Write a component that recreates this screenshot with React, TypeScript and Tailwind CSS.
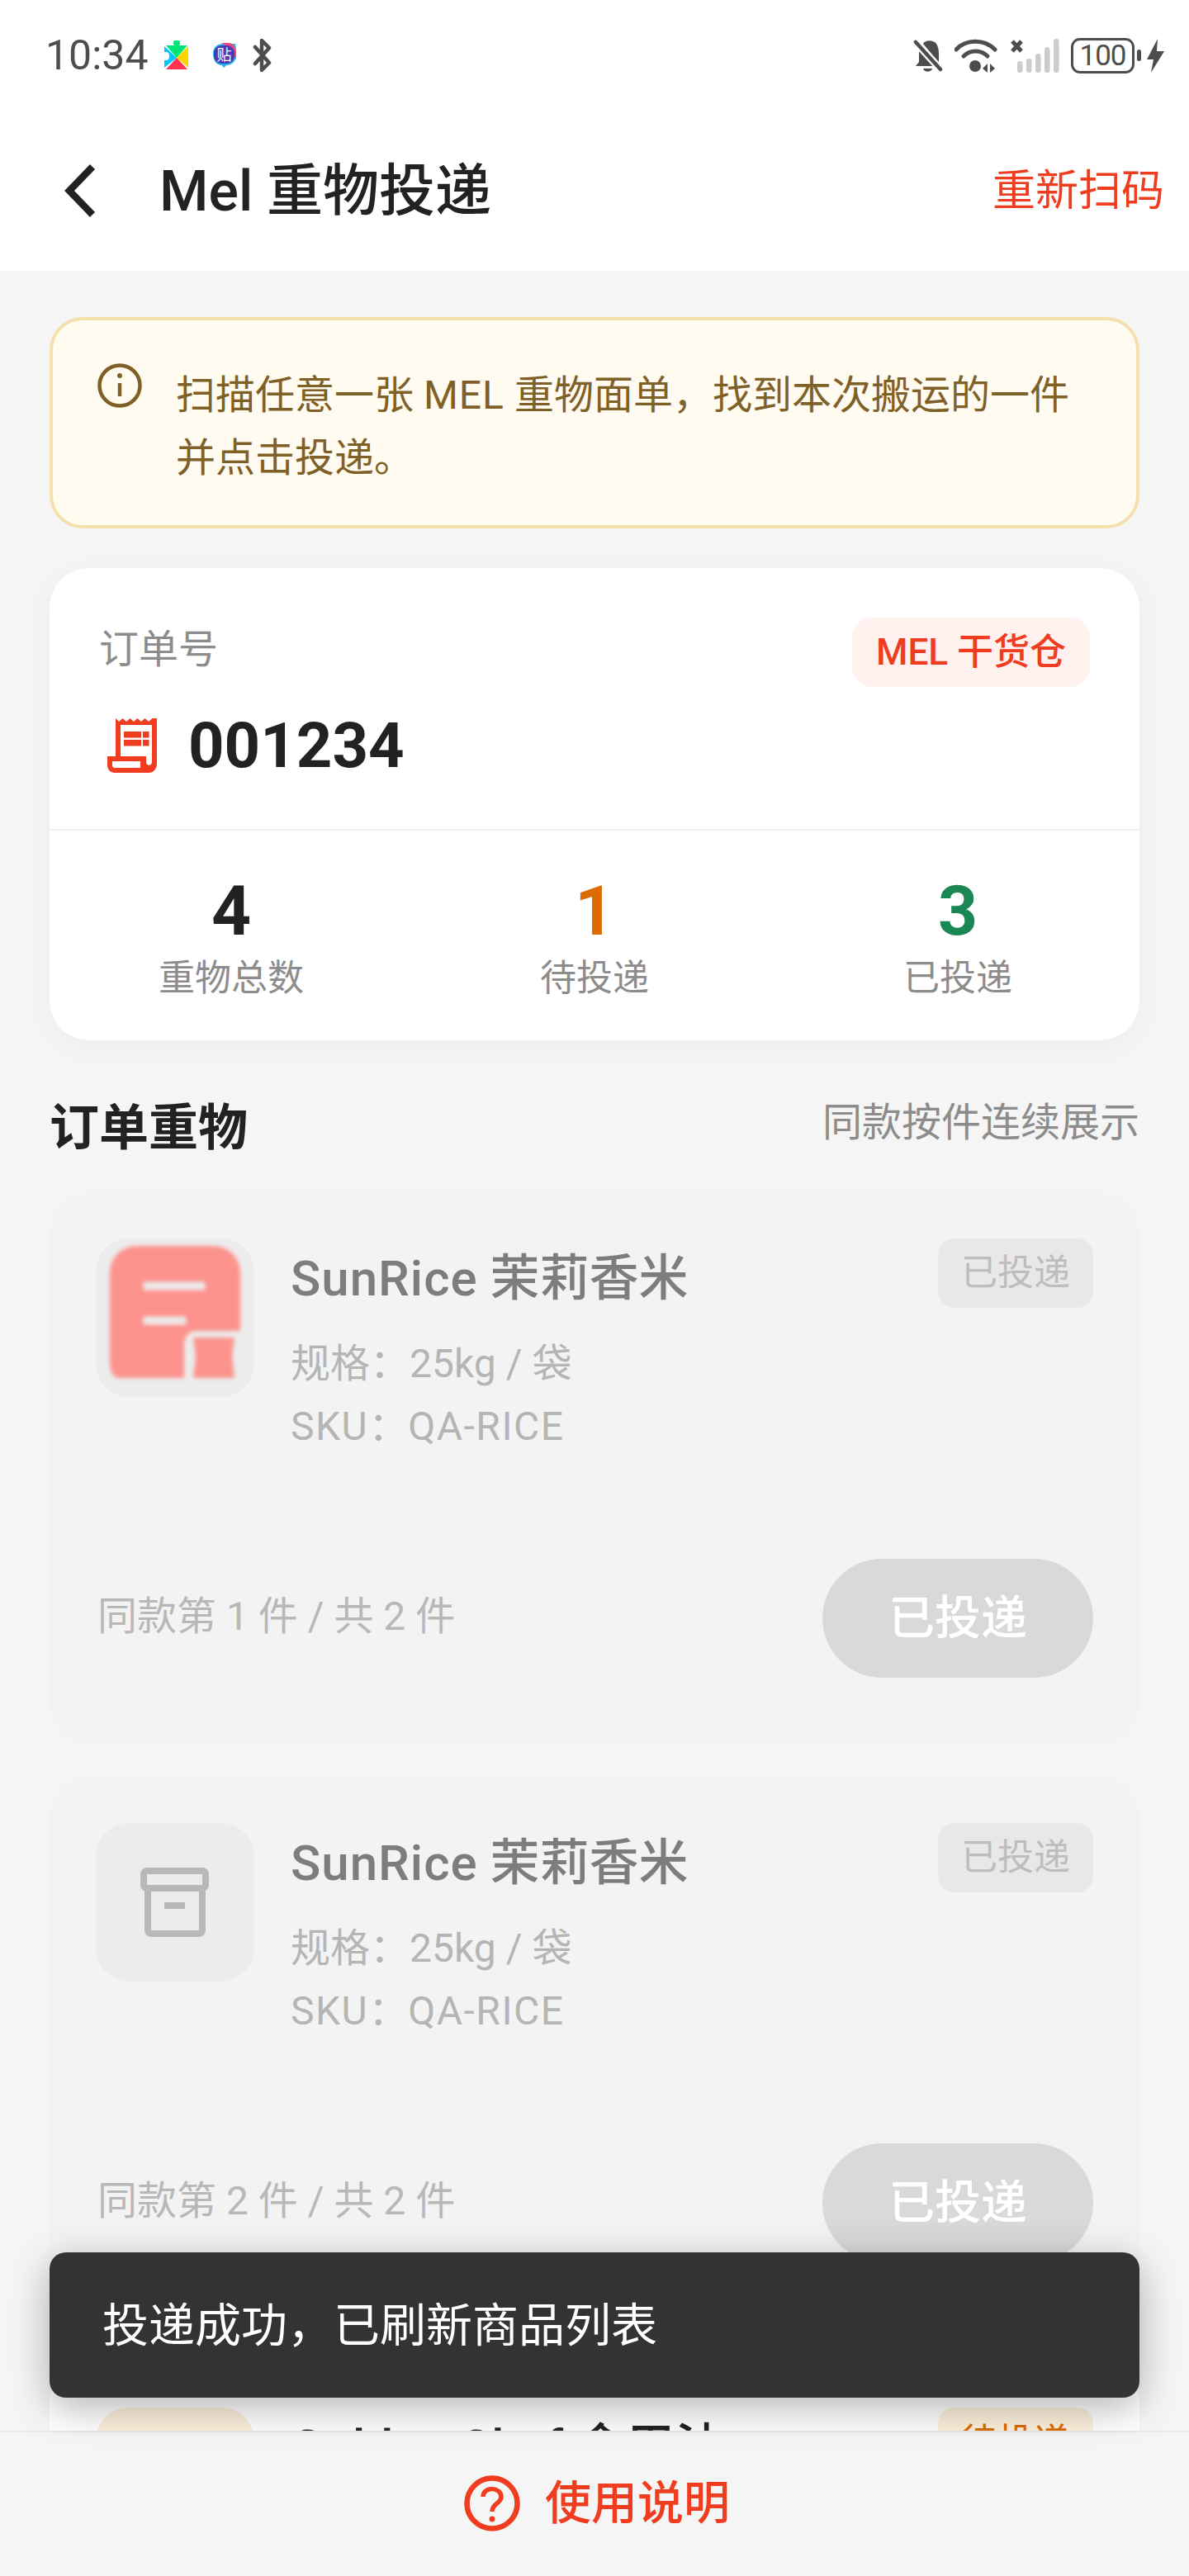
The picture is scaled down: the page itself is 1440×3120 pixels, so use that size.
import React from "react";

const RED = "#f03c1f";

function PlayIcon() {
  return (
    <svg width="30" height="36" viewBox="0 0 30 36" className="ml-[22px] shrink-0">
      <rect x="11" y="0" width="8" height="6" rx="2" fill="#00e676" />
      <path d="M2 6H28L15 21Z" fill="#00e676" />
      <path d="M0 7V14H3C7 14 7 24 3 24H0V33L15 21Z" fill="#00c8f8" />
      <path d="M29 7V33L15 21Z" fill="#ffd500" />
      <path d="M2 35H28L15 21Z" fill="#ff3350" />
    </svg>
  );
}

function TieIcon() {
  return (
    <svg width="28" height="31" viewBox="0 0 28 31" className="ml-[29px] shrink-0">
      <path d="M0 13C0 5 5 1 13 1H27C28 6 28 10 28 15C28 23 22 27 16 27L13 30L11 27C4 27 0 21 0 13Z" fill="#1fb1f0" />
      <path d="M10 0H20C25 1 28 6 28 13V20L20 6Z" fill="#f0487c" />
      <rect x="1" y="3" width="25" height="22" rx="9" fill="#4a3ab5" />
      <text x="13.5" y="21" fontSize="18" fill="#ffffff" textAnchor="middle" fontFamily="'Noto Sans CJK SC', sans-serif">贴</text>
    </svg>
  );
}

function BtIcon() {
  return (
    <svg width="24" height="42" viewBox="0 0 24 42" className="ml-[20px] shrink-0" fill="none" stroke="#4d4d4d" strokeWidth="4.5" strokeLinejoin="round" strokeLinecap="round">
      <path d="M3 11L20 30L11 39V3L20 12L3 31" />
    </svg>
  );
}

function BellOff() {
  return (
    <svg width="36" height="41" viewBox="0 0 36 41" className="shrink-0">
      <path d="M12 6C15 1 24 1 28 6C30 9 31 13 31 18V29L12 6Z" fill="#4d4d4d" />
      <path d="M3 33L7 28V15L26 33H3Z" fill="#4d4d4d" />
      <path d="M12 36H23C22 41 13 41 12 36Z" fill="#4d4d4d" />
      <path d="M2 3L33 37" stroke="#fff" strokeWidth="9" />
      <path d="M3 4L33 37" stroke="#4d4d4d" strokeWidth="4.5" strokeLinecap="round" />
    </svg>
  );
}

function Wifi() {
  return (
    <svg width="52" height="41" viewBox="0 0 52 41" className="ml-[14px] shrink-0" fill="none" stroke="#4d4d4d" strokeWidth="5" strokeLinecap="round">
      <path d="M2 13C14 0 36 0 49 13" />
      <path d="M11 21C19 13 32 13 40 21" />
      <circle cx="25" cy="33" r="7" fill="#4d4d4d" stroke="none" />
      <path d="M40 30L34 36L40 41Z" fill="#4d4d4d" stroke="none" />
      <path d="M43 30L49 36L43 41Z" fill="#4d4d4d" stroke="none" />
    </svg>
  );
}

function Signal() {
  return (
    <svg width="60" height="41" viewBox="0 0 60 41" className="ml-[15px] shrink-0">
      <g fill="#cccccc">
        <rect x="9" y="27" width="6.5" height="14" rx="3.2" />
        <rect x="20" y="24" width="6.5" height="17" rx="3.2" />
        <rect x="31" y="18" width="6.5" height="23" rx="3.2" />
        <rect x="42" y="10" width="6.5" height="31" rx="3.2" />
        <rect x="53" y="0" width="6.5" height="41" rx="3.2" />
      </g>
      <path d="M3 3L14 15M14 3L3 15" stroke="#4d4d4d" strokeWidth="5" />
    </svg>
  );
}

function Battery() {
  return (
    <div className="flex items-center ml-[14px] shrink-0">
      <div className="w-[77px] h-[43px] rounded-[11px] border-[3px] border-[#4d4d4d] flex items-center justify-center text-[#4d4d4d] text-[35px] leading-[37px] tracking-[-1px]">
        100
      </div>
      <div className="w-[5px] h-[14px] rounded-[2.5px] bg-[#4d4d4d] ml-[3px]" />
      <svg width="21" height="41" viewBox="0 0 21 41" className="ml-[7px]">
        <path d="M13 0L0 25H8L5 41L21 15H12Z" fill="#4d4d4d" />
      </svg>
    </div>
  );
}

function StatusBar() {
  return (
    <div className="h-[134px] flex items-center justify-between pl-[55px] pr-[30px]">
      <div className="flex items-center">
        <span className="w-[122px] text-[50px] leading-[60px] text-[#4d4d4d]">10:34</span>
        <PlayIcon />
        <TieIcon />
        <BtIcon />
      </div>
      <div className="flex items-center">
        <BellOff />
        <Wifi />
        <Signal />
        <Battery />
      </div>
    </div>
  );
}

function Header() {
  return (
    <div className="h-[194px] flex items-center justify-between pl-[78px] pr-[30px]">
      <div className="flex items-center">
        <svg width="38" height="64" viewBox="0 0 38 64" fill="none" stroke="#222222" strokeWidth="8.5">
          <path d="M34 3L6 32L34 61" />
        </svg>
        <span className="ml-[77px] mt-[2px] text-[68px] leading-[80px] font-medium text-[#222222]">Mel 重物投递</span>
      </div>
      <span className="mt-[2px] text-[52px] leading-[64px] text-[#f03c1f]">重新扫码</span>
    </div>
  );
}

function Notice() {
  return (
    <div className="h-[256px] rounded-[40px] border-[4px] border-[#f4e0ad] bg-[#fffbf0] flex pl-[54px] pr-[40px] pt-[36px]">
      <svg width="54" height="54" viewBox="0 0 54 54" className="shrink-0 mt-[16px]" fill="none" stroke="#7f6128" strokeWidth="4.5">
        <circle cx="27" cy="27" r="24.5" />
        <path d="M27 24V40" />
        <circle cx="27" cy="15" r="3" fill="#7f6128" stroke="none" />
      </svg>
      <p className="ml-[41px] mt-[17px] text-[48px] leading-[76px] text-[#7f6128]">
        扫描任意一张 <span className="tracking-[1px]">MEL</span> 重物面单，找到本次搬运的一件并点击投递。
      </p>
    </div>
  );
}

function ReceiptIcon() {
  return (
    <svg width="60" height="66" viewBox="0 0 60 66" className="shrink-0">
      <path
        d="M10 0L14 4L18.500 0L23 4L27.500 0L32 4L36.500 0L41 4L45.500 0L50 4L54.500 0L60 0V55C60 61 56 66 50 66H9C4 66 0 62 0 57V46H10Z"
        fill={RED}
      />
      <path d="M16 8H54V53C54 58 47 58 47 53V46H16Z" fill="#ffffff" />
      <path d="M6 52H40V60H9C7 60 6 59 6 57Z" fill="#ffffff" />
      <rect x="20" y="16" width="21" height="7.500" fill={RED} />
      <rect x="20" y="26" width="21" height="7.500" fill={RED} />
      <rect x="43" y="16" width="7.500" height="7.500" fill={RED} />
      <rect x="43" y="26" width="7.500" height="7.500" fill={RED} />
    </svg>
  );
}

function Stat({ n, label, color }: { n: string; label: string; color: string }) {
  return (
    <div className="flex-1 flex flex-col items-center">
      <span className={`text-[84px] leading-[84px] font-bold ${color}`}>{n}</span>
      <span className="text-[44px] leading-[64px] text-[#8c8c8c] mt-[7px]">{label}</span>
    </div>
  );
}

function OrderCard() {
  return (
    <div className="mt-[48px] h-[572px] rounded-[48px] bg-white shadow-[0_8px_40px_rgba(0,0,0,0.04)] flex flex-col">
      <div className="h-[318px] border-b-2 border-[#f1f1f1] pl-[60px] pr-[60px] pt-[60px] flex justify-between items-start">
        <div className="pt-[9px]">
          <div className="text-[48px] leading-[60px] text-[#8c8c8c]">订单号</div>
          <div className="mt-[46px] h-[80px] flex items-center pl-[10px]">
            <ReceiptIcon />
            <span className="ml-[38px] text-[76px] leading-[80px] font-bold text-[#222222]">001234</span>
          </div>
        </div>
        <div className="w-[288px] h-[84px] rounded-[24px] bg-[#fff1ee] flex items-center justify-center text-[44px] font-medium leading-[60px] text-[#f03c1f]">
          MEL 干货仓
        </div>
      </div>
      <div className="flex pt-[56px]">
        <Stat n="4" label="重物总数" color="text-[#222222]" />
        <Stat n="1" label="待投递" color="text-[#dd6b00]" />
        <Stat n="3" label="已投递" color="text-[#1a8754]" />
      </div>
    </div>
  );
}

function BlurredThumb() {
  return (
    <svg width="192" height="192" viewBox="0 0 192 192" className="shrink-0 rounded-[40px] bg-[#ececec]">
      <defs>
        <filter id="soft" x="-10%" y="-10%" width="120%" height="120%">
          <feGaussianBlur stdDeviation="2.5" />
        </filter>
      </defs>
      <g filter="url(#soft)">
        <path d="M50 9H142C162 9 175 24 175 42V112H122C112 112 107 120 107 130V169H28C21 169 17 160 17 150V42C17 24 30 9 50 9Z" fill="#fd938d" />
        <path d="M118 120H168L165 143L168 169H118L121 143Z" fill="#fd938d" />
        <rect x="58" y="53" width="74" height="9" fill="#ececec" />
        <rect x="58" y="95" width="51" height="9" fill="#ececec" />
      </g>
    </svg>
  );
}

function BoxThumb() {
  return (
    <div className="w-[192px] h-[192px] rounded-[40px] bg-[#ececec] shrink-0 flex items-center justify-center">
      <svg width="84" height="84" viewBox="0 0 84 84" fill="none" stroke="#b8b8b8" strokeWidth="8">
        <rect x="4" y="4" width="75" height="21" rx="4" />
        <path d="M9 25V76C9 78 10 80 13 80H71C74 80 75 78 75 76V25" />
        <rect x="29" y="42" width="25" height="8" fill="#b8b8b8" stroke="none" />
      </svg>
    </div>
  );
}

function DoneCard({ thumb, index }: { thumb: React.ReactNode; index: number }) {
  return (
    <div className="h-[668px] rounded-[48px] bg-[#f3f3f3] p-[56px] pb-[80px] flex flex-col justify-between">
      <div className="flex items-start">
        {thumb}
        <div className="ml-[44px] flex-1 pt-[13px]">
          <div className="text-[60px] leading-[72px] font-medium text-[#7d7d7d]">
            <span className="tracking-[1px]">SunRice</span> 茉莉香米
          </div>
          <div className="mt-[29px] text-[48px] leading-[76px] text-[#b5b5b5]">规格：25kg / 袋</div>
          <div className="text-[48px] leading-[76px] text-[#b5b5b5]">
            <span className="tracking-[1.5px]">SKU</span>：<span className="tracking-[1.5px]">QA-RICE</span>
          </div>
        </div>
        <div className="w-[188px] h-[84px] rounded-[20px] bg-[#e8e8e8] flex items-center justify-center text-[44px] text-[#bdbdbd] shrink-0">
          已投递
        </div>
      </div>
      <div className="flex items-center justify-between pl-[2px]">
        <span className="text-[48px] leading-[60px] text-[#b8b8b8] -mt-[4px]">同款第 {index} 件 / 共 2 件</span>
        <div className="w-[328px] h-[144px] rounded-full bg-[#d9d9d9] flex items-center justify-center text-[56px] font-medium text-white">
          已投递
        </div>
      </div>
    </div>
  );
}

function PendingCard() {
  return (
    <div className="h-[668px] rounded-[48px] bg-white p-[56px] flex items-start shrink-0">
      <div className="w-[192px] h-[192px] rounded-[40px] bg-[#fdf0dc] shrink-0" />
      <div className="ml-[44px] flex-1 pt-[13px]">
        <div className="text-[60px] leading-[72px] font-medium text-[#222222]">Golden Chef 食用油</div>
      </div>
      <div className="w-[188px] h-[84px] rounded-[20px] bg-[#fdf0dc] flex items-center justify-center text-[44px] text-[#dd6b00] shrink-0">
        待投递
      </div>
    </div>
  );
}

export default function App() {
  return (
    <div lang="zh-CN" className="relative w-[1440px] h-[3120px] overflow-hidden flex flex-col bg-[#f5f5f5] font-['Roboto','Noto_Sans_CJK_SC',sans-serif]">
      <div className="bg-white h-[328px] shrink-0">
        <StatusBar />
        <Header />
      </div>
      <div className="flex-1 min-h-0 overflow-hidden px-[60px] pt-[56px]">
        <Notice />
        <OrderCard />
        <div className="mt-[72px] mb-[44px] flex items-start justify-between">
          <span className="mt-[2px] text-[60px] leading-[66px] font-bold text-[#222222]">订单重物</span>
          <span className="text-[48px] leading-[56px] text-[#8c8c8c]">同款按件连续展示</span>
        </div>
        <div className="flex flex-col gap-[40px]">
          <DoneCard thumb={<BlurredThumb />} index={1} />
          <DoneCard thumb={<BoxThumb />} index={2} />
          <PendingCard />
        </div>
      </div>
      <div className="h-[176px] shrink-0 border-t-2 border-[#e8e8e8] bg-[#f5f5f5] flex items-center justify-center pl-[6px] z-10">
        <svg width="68" height="68" viewBox="0 0 68 68" fill="none" stroke={RED} strokeWidth="6.500" className="-mt-[2px]">
          <circle cx="34" cy="34" r="30.500" />
          <path d="M23 26C23 13 45 14 45 26C45 34 34 34 34 44" strokeWidth="5.500" />
          <circle cx="34" cy="53" r="3.500" fill={RED} stroke="none" />
        </svg>
        <span className="ml-[30px] -mt-[2px] text-[56px] leading-[72px] font-medium text-[#f03c1f]">使用说明</span>
      </div>
      <div className="absolute left-[60px] top-[2728px] w-[1320px] h-[176px] rounded-[20px] bg-[#333333] shadow-[0_12px_48px_rgba(0,0,0,0.3)] flex items-center pl-[64px] z-20">
        <span className="mt-[2px] text-[56px] leading-[72px] text-white">投递成功，已刷新商品列表</span>
      </div>
    </div>
  );
}
